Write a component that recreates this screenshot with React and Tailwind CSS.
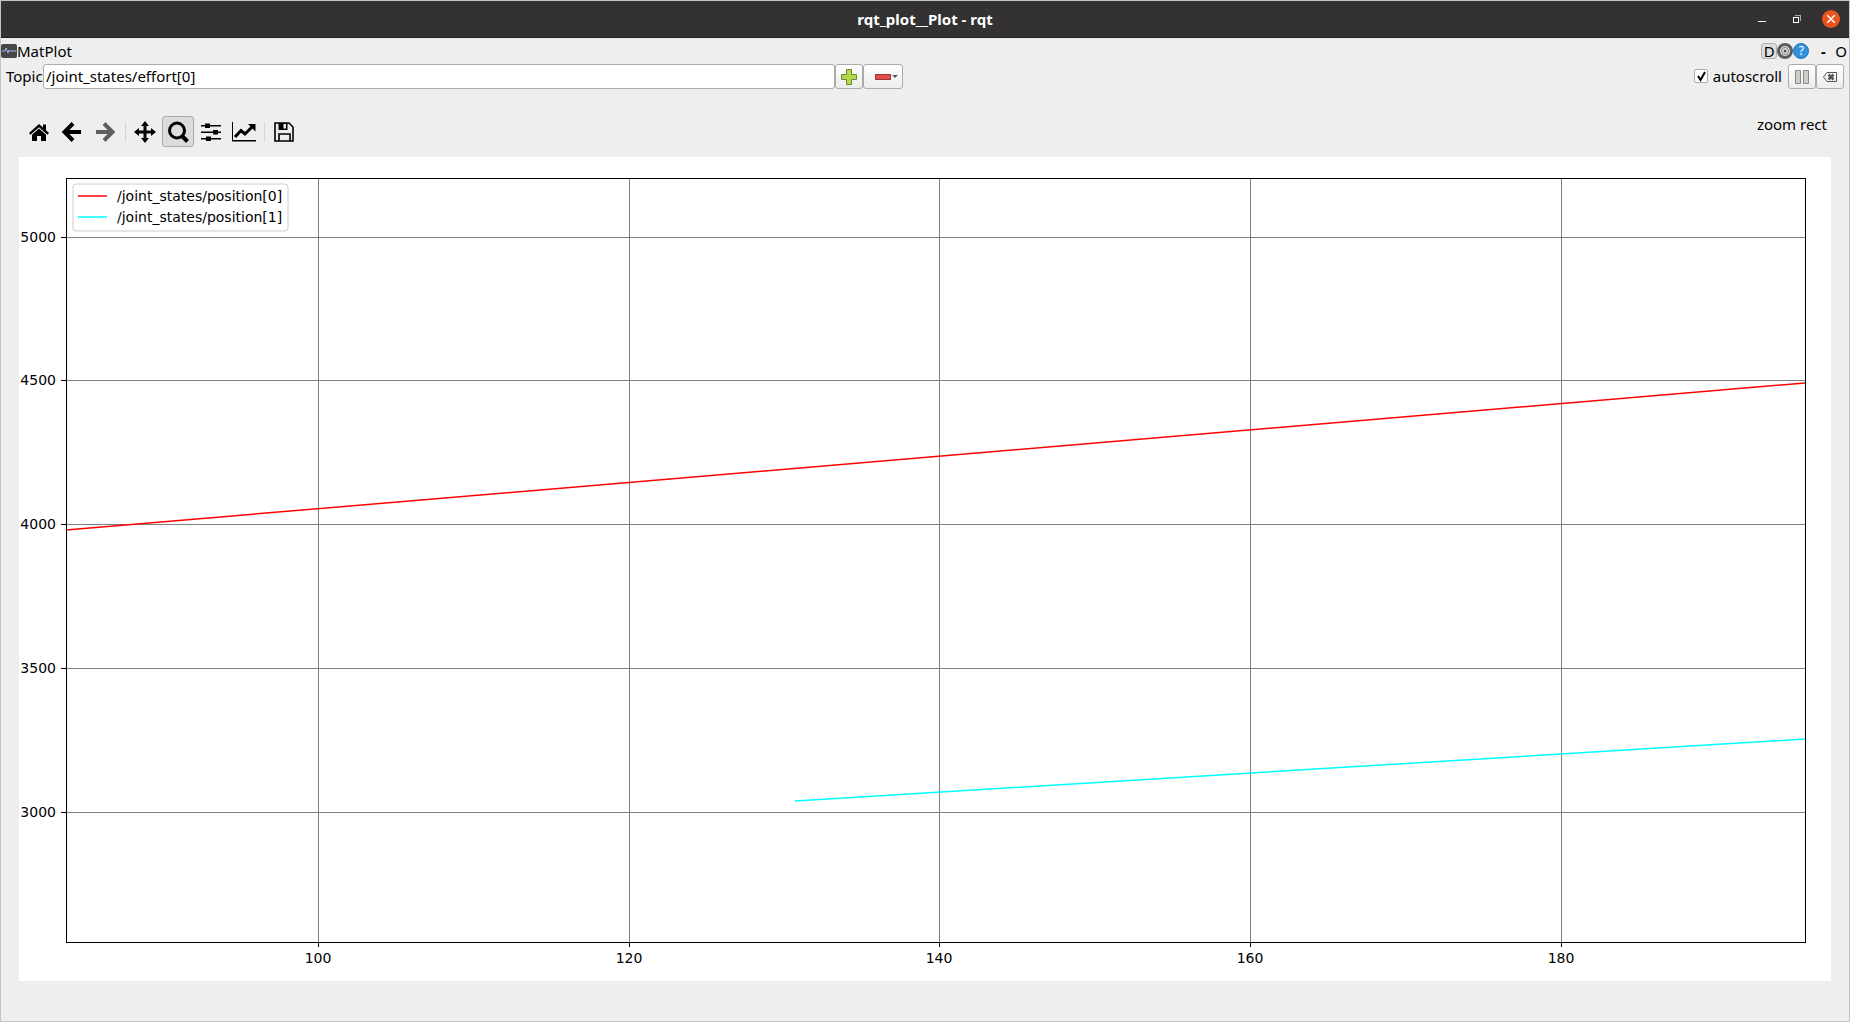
import React, { useState } from "react";

const X_TICKS = [
  { label: "100", x: 299 },
  { label: "120", x: 610 },
  { label: "140", x: 920 },
  { label: "160", x: 1231 },
  { label: "180", x: 1542 },
];
const Y_TICKS = [
  { label: "5000", y: 80 },
  { label: "4500", y: 223 },
  { label: "4000", y: 367 },
  { label: "3500", y: 511 },
  { label: "3000", y: 655 },
];

function Plot() {
  return (
    <svg viewBox="0 0 1812 824" className="block w-full bg-white font-['DejaVu_Sans',sans-serif] text-[14px]" role="img" aria-label="Joint states plot">
      <g stroke="#808080" strokeWidth="1" shapeRendering="crispEdges">
        {X_TICKS.map((t) => <line key={t.label} x1={t.x} x2={t.x} y1="21" y2="785" />)}
        {Y_TICKS.map((t) => <line key={t.label} x1="47" x2="1786" y1={t.y} y2={t.y} />)}
      </g>
      <g fill="none" strokeWidth="1.5">
        <path d="M47 373 L1786 226" stroke="#ff0000" />
        <path d="M776 644 L1786 582" stroke="#00ffff" />
      </g>
      <g stroke="#000" strokeWidth="1" shapeRendering="crispEdges">
        {X_TICKS.map((t) => <line key={t.label} x1={t.x} x2={t.x} y1="785" y2="790" />)}
        {Y_TICKS.map((t) => <line key={t.label} x1="42" x2="47" y1={t.y} y2={t.y} />)}
        <rect x="47" y="21" width="1739" height="764" fill="none" />
      </g>
      {X_TICKS.map((t) => <text key={t.label} x={t.x} y="806" textAnchor="middle">{t.label}</text>)}
      {Y_TICKS.map((t) => <text key={t.label} x="37" y={t.y + 5} textAnchor="end">{t.label}</text>)}
      <rect x="54" y="27" width="215" height="47" rx="3" fill="#fff" fillOpacity="0.8" stroke="#ccc" />
      <line x1="59" x2="88" y1="39" y2="39" stroke="#ff0000" strokeWidth="1.5" />
      <line x1="59" x2="88" y1="60" y2="60" stroke="#00ffff" strokeWidth="1.5" />
      <text x="98" y="44">/joint_states/position[0]</text>
      <text x="98" y="65">/joint_states/position[1]</text>
    </svg>
  );
}

const HomeIcon = () => (
  <svg viewBox="0 0 24 24" className="size-6">
    <path d="M12 4 L2 13 L3.5 14.7 L12 7.2 L20.5 14.7 L22 13 L19 10.2 V4.5 H16 V7.5 Z" />
    <path d="M12 8.6 L5 14.8 V21 H10 V16 H14 V21 H19 V14.8 Z" />
  </svg>
);
const ArrowIcon = ({ flip }) => (
  <svg viewBox="0 0 24 24" className={flip ? "size-6 -scale-x-100 opacity-60" : "size-6"}>
    <path d="M13 3.5 L4.5 12 L13 20.5 M5 12 H21" fill="none" stroke="#000" strokeWidth="4" />
  </svg>
);
const MoveIcon = () => (
  <svg viewBox="0 0 24 24" className="size-6">
    <path d="M12 1 L16 6 H13.5 V10.5 H18 V8 L23 12 L18 16 V13.5 H13.5 V18 H16 L12 23 L8 18 H10.5 V13.5 H6 V16 L1 12 L6 8 V10.5 H10.5 V6 H8 Z" />
  </svg>
);
const ZoomIcon = () => (
  <svg viewBox="0 0 24 24" className="size-6" fill="none" stroke="#000">
    <circle cx="11" cy="10.500" r="7.500" strokeWidth="3" />
    <path d="M16 16 L21.500 21.500" strokeWidth="4" />
  </svg>
);
const SlidersIcon = () => (
  <svg viewBox="0 0 24 24" className="size-6">
    <path d="M2 5h20v1.600H2z M2 11.500h20v1.600H2z M2 18h20v1.600H2z" />
    <path d="M6 3.500h5v4.600H6z M14 10h5v4.600h-5z M7 16.500h5v4.600H7z" />
  </svg>
);
const ChartIcon = () => (
  <svg viewBox="0 0 24 24" className="size-6">
    <path d="M0 2h1v18h23v1.500H0z" />
    <path d="M3 17 L9 10.500 L13 14 L20 7" fill="none" stroke="#000" strokeWidth="3" />
    <path d="M16 4h7.500v7.500z" />
  </svg>
);
const SaveIcon = () => (
  <svg viewBox="0 0 24 24" className="size-6" fill="none" stroke="#000" strokeWidth="1.600">
    <path d="M3 3h14l4 4v14H3z M7 21v-7h11v7" />
    <path d="M6.500 3h9v7h-9z" fill="#000" stroke="none" />
    <path d="M11.500 4h2.500v4.500h-2.500z" fill="#eee" stroke="none" />
  </svg>
);

function ToolButton({ label, active, children }) {
  return (
    <button
      type="button"
      aria-label={label}
      aria-pressed={active}
      className={
        active
          ? "flex h-[31px] w-8 items-center justify-center rounded-[3px] border border-[#aaa] bg-[#dcdcdc]"
          : "flex h-[31px] w-8 items-center justify-center"
      }
    >
      {children}
    </button>
  );
}

const Separator = () => <div className="mr-0.5 ml-[3px] h-5 w-px bg-[#d4d4d4]" />;

export default function App() {
  const [autoscroll, setAutoscroll] = useState(true);
  const [topic, setTopic] = useState("/joint_states/effort[0]");
  const pushButton = "flex h-[25px] items-center justify-center rounded-[3px] border border-[#acacac] bg-linear-to-b from-white to-[#ececec]";
  return (
    <div className="flex min-h-screen flex-col border border-[#c4c4c4] bg-[#eee] font-['Noto_Sans',sans-serif] text-[15px] leading-5 text-black">
      <header className="grid h-[37px] grid-cols-[1fr_auto_1fr] items-center border-b border-[#1f1e1e] bg-[#333132] text-white">
        <h1 className="col-start-2 font-bold">rqt_plot__Plot - rqt</h1>
        <div className="flex items-center justify-end gap-5 pr-[9px]">
          <button type="button" aria-label="Minimize" className="mr-1.5 flex h-5 w-2 items-center">
            <svg viewBox="0 0 8 8" className="h-2 w-2 overflow-visible"><path d="M0 6h8v1H0z" fill="#fff" /></svg>
          </button>
          <button type="button" aria-label="Restore">
            <svg viewBox="0 0 10 10" className="size-[10px]" shapeRendering="crispEdges">
              <path d="M3 1h6v6h-1v-5h-5z" fill="#aaa" />
              <path d="M1 3h6v6H1z M2 4v4h4v-4z" fill="#fff" fillRule="evenodd" />
            </svg>
          </button>
          <button type="button" aria-label="Close" className="flex size-[18px] items-center justify-center rounded-full bg-[#e95420]">
            <svg viewBox="0 0 8 8" className="size-2"><path d="M0 0l8 8M8 0l-8 8" stroke="#fff" strokeWidth="1.500" /></svg>
          </button>
        </div>
      </header>

      <div className="flex h-[26px] items-center justify-between pr-0.5">
        <div className="flex items-center">
          <svg viewBox="0 0 16 16" className="size-4">
            <rect x="0" y="1" width="16" height="14" rx="2" fill="#474747" />
            <path d="M1 8h3l1-3 2 5 1-3 1 1h6" fill="none" stroke="#9db8ee" strokeWidth="1" />
          </svg>
          <h2>MatPlot</h2>
        </div>
        <div className="flex items-center">
          <button type="button" className="flex size-4 items-center justify-center rounded-[3px] border border-[#b0b0b0] bg-[#dedede]">D</button>
          <button type="button" aria-label="Settings">
            <svg viewBox="0 0 16 16" className="size-4" fill="none">
              <circle cx="8" cy="8" r="6.500" fill="#e4e4e4" stroke="#5c5c5c" strokeWidth="3" />
              <circle cx="8" cy="8" r="3.500" stroke="#777" strokeWidth="1" />
              <circle cx="8" cy="8" r="1.500" fill="#555" />
            </svg>
          </button>
          <button type="button" aria-label="Help" className="flex size-4 items-center justify-center rounded-full border border-[#1d72b8] bg-[#2f93dc] text-xs text-white">?</button>
          <button type="button" className="ml-2.5 w-2 font-bold">-</button>
          <button type="button" className="ml-2">O</button>
        </div>
      </div>

      <div className="flex items-center pr-[5px] pl-[5px]">
        <div className="flex w-[897px] shrink items-center">
          <label htmlFor="topic" className="w-[37px] shrink-0 pb-0.5">Topic</label>
          <input id="topic" value={topic} onChange={(e) => setTopic(e.target.value)} className="h-[25px] w-0 grow rounded-[3px] border border-[#acacac] bg-white px-0.5 pb-0.5 outline-none" />
          <button type="button" aria-label="Add topic" className={pushButton + " w-7"}>
            <svg viewBox="0 0 16 16" className="size-4"><path d="M5.500 .5h5v5h5v5h-5v5h-5v-5h-5v-5h5z" fill="#b5d54c" stroke="#5f9127" /></svg>
          </button>
          <button type="button" aria-label="Remove topic" className={pushButton + " w-10 gap-px pl-1.5"}>
            <svg viewBox="0 0 16 6" className="h-1.5 w-4"><rect x=".5" y=".5" width="15" height="5" fill="#dd4f4f" stroke="#a83232" /></svg>
            <svg viewBox="0 0 6 4" className="h-1 w-1.5"><path d="M0 0h6l-3 3z" fill="#555" /></svg>
          </button>
        </div>
        <div className="ml-auto flex items-center">
          <label className="mr-1.5 flex items-center gap-[5px] pb-0.5">
            <span className="grid">
              <input type="checkbox" checked={autoscroll} onChange={(e) => setAutoscroll(e.target.checked)} className="peer col-start-1 row-start-1 size-[14px] appearance-none rounded-[2px] border border-[#acacac] bg-white" />
              <svg viewBox="0 0 14 14" className="pointer-events-none col-start-1 row-start-1 hidden size-[14px] peer-checked:block"><path d="M4 7l2.500 4L11 3" fill="none" stroke="#000" strokeWidth="2" /></svg>
            </span>
            autoscroll
          </label>
          <button type="button" aria-label="Pause" className={pushButton + " w-7"}>
            <svg viewBox="0 0 16 16" className="size-4"><path d="M1.500 1.500h5v13h-5z M9.500 1.500h5v13h-5z" fill="#ccceca" stroke="#888a85" /></svg>
          </button>
          <button type="button" aria-label="Clear plot" className={pushButton + " w-7"}>
            <svg viewBox="0 0 16 16" className="size-4" fill="none" stroke="#555">
              <path d="M5 3.500h9.500v9H5L1.500 8z" />
              <path d="M6.500 5.500l5 5M11.500 5.500l-5 5" strokeWidth="2.500" />
            </svg>
          </button>
        </div>
      </div>

      <main className="flex grow flex-col px-[18px] pt-[27px] pb-10">
        <div className="flex h-[41px] items-start justify-between pr-1 pl-1">
          <div className="flex h-[31px] items-center gap-px">
            <ToolButton label="Home"><HomeIcon /></ToolButton>
            <ToolButton label="Back"><ArrowIcon /></ToolButton>
            <ToolButton label="Forward"><ArrowIcon flip /></ToolButton>
            <Separator />
            <ToolButton label="Pan"><MoveIcon /></ToolButton>
            <ToolButton label="Zoom" active><ZoomIcon /></ToolButton>
            <ToolButton label="Subplots"><SlidersIcon /></ToolButton>
            <ToolButton label="Customize"><ChartIcon /></ToolButton>
            <Separator />
            <ToolButton label="Save"><SaveIcon /></ToolButton>
          </div>
          <output className="leading-4">zoom rect</output>
        </div>
        <Plot />
      </main>
    </div>
  );
}
